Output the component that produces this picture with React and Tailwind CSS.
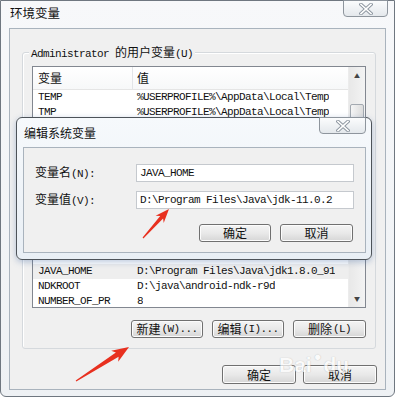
import React from 'react';

const cjk = { fontFamily: '"Noto Sans CJK SC", "Noto Sans", sans-serif' };

const arrowPoints = (x1, y1, x2, y2, neck, head, headLen) => {
  const dx = x2 - x1;
  const dy = y2 - y1;
  const len = Math.hypot(dx, dy);
  const ux = dx / len;
  const uy = dy / len;
  const p = (a, b) => `${(x1 + ux * a - uy * b).toFixed(1)},${(y1 + uy * a + ux * b).toFixed(1)}`;
  return [
    p(0, 0.6),
    p(len - headLen, neck / 2),
    p(len - headLen - 3, head / 2),
    p(len, 0),
    p(len - headLen - 3, -head / 2),
    p(len - headLen, -neck / 2),
    p(0, -0.6),
  ].join(' ');
};

const CloseGlyph = () => (
  <svg width="14" height="12" viewBox="0 0 14 12">
    <path d="M2 1.5 L12 10.5 M12 1.5 L2 10.5" stroke="#8d96a0" strokeWidth="3.6" strokeLinecap="square" />
    <path d="M2 1.5 L12 10.5 M12 1.5 L2 10.5" stroke="#ffffff" strokeWidth="1.6" strokeLinecap="square" />
  </svg>
);

const Btn = ({ children, className = '' }) => (
  <button
    className={`h-[18px] flex items-center justify-center rounded-[3px] border border-[#707070] bg-gradient-to-b from-[#f4f4f4] via-[#e9e9e9] to-[#d6d6d6] text-[12px] leading-none text-[#111] shadow-[inset_0_0_0_1px_#fcfcfc] ${className}`}
  >
    {children}
  </button>
);

// SimSun-like half-width text: 6px advance per character
const Mono = ({ children, className = '' }) => (
  <span className={`font-['Liberation_Mono',monospace] text-[11px] tracking-[-0.6px] leading-none ${className}`}>{children}</span>
);

const Row = ({ name, value, selected }) => (
  <div className={`flex h-[15px] items-center ${selected ? 'bg-[#eeeeee]' : ''}`}>
    <Mono className="w-[100px] pl-[5px] whitespace-nowrap overflow-hidden">{name}</Mono>
    <Mono className="pl-[4px] whitespace-nowrap overflow-hidden">{value}</Mono>
  </div>
);

export default function App() {
  return (
    <div className="relative w-[399px] h-[409px] overflow-hidden bg-white text-[#111]" style={cjk}>
      {/* main window */}
      <div className="w-[395px] h-[397px] rounded-b-[6px] border border-[#6f7780] bg-gradient-to-b from-[#f7f8fa] to-[#eef1f4]">
        <div className="flex items-start justify-between h-[27px] pl-[9px] pr-[6px]">
          <span className="mt-[4px] text-[12.5px] leading-[16px]">环境变量</span>
          <div className="w-[45px] h-[17px] -mt-px flex items-center justify-center rounded-b-[4px] border border-[#8e959d] bg-gradient-to-b from-[#fbfcfd] to-[#e4e8ec]">
            <CloseGlyph />
          </div>
        </div>

        {/* client area */}
        <div className="ml-[8px] w-[377px] h-[362px] border border-[#a9b3bd] bg-[#f0f0f0] pt-[23px]">
          {/* group box */}
          <div className="relative ml-[12px] w-[354px] h-[297px] border border-[#d5d9dd] rounded-[3px] shadow-[inset_1px_1px_0_#ffffff]">
            <div className="absolute left-[6px] -top-[9px] bg-[#f0f0f0] px-[2px] text-[12px] leading-[16px] whitespace-nowrap">
              <Mono>Administrator </Mono>的用户变量<Mono>(U)</Mono>
            </div>

            {/* list view */}
            <div className="ml-[9px] mt-[13px] w-[334px] h-[242px] border border-[#828790] bg-white flex">
              <div className="flex-1 overflow-hidden">
                <div className="flex h-[23px] border-b border-[#e5e5e5] bg-gradient-to-b from-white to-[#f7f8f9] text-[12px]">
                  <div className="w-[100px] pl-[5px] flex items-center border-r border-[#e3e5e8]">变量</div>
                  <div className="pl-[4px] flex items-center">值</div>
                </div>
                <Row name="TEMP" value="%USERPROFILE%\AppData\Local\Temp" />
                <Row name="TMP" value="%USERPROFILE%\AppData\Local\Temp" />
                {/* rows hidden under the dialog */}
                <div className="h-[144px]" />
                <Row name="JAVA_HOME" value="D:\Program Files\Java\jdk1.8.0_91" selected />
                <Row name="NDKROOT" value="D:\java\android-ndk-r9d" />
                <Row name="NUMBER_OF_PR" value="8" />
              </div>
              {/* scrollbar */}
              <div className="w-[17px] flex flex-col bg-gradient-to-r from-[#e8e8e8] to-[#f3f3f3] border-l border-[#ececec]">
                <div className="h-[17px] flex items-center justify-center text-[6px] text-[#444]">▲</div>
                <div className="mt-[20px] mx-[1px] h-[50px] rounded-[2px] border border-[#a3a9b0] bg-gradient-to-r from-[#f5f5f5] to-[#dcdcdc]" />
                <div className="flex-1" />
                <div className="h-[17px] flex items-center justify-center text-[6px] text-[#444]">▼</div>
              </div>
            </div>

            <div className="mt-[12px] pr-[9px] flex justify-end gap-[9px]">
              <Btn className="w-[72px]">新建<Mono className="ml-[1px]">(W)...</Mono></Btn>
              <Btn className="w-[72px]">编辑<Mono className="ml-[1px]">(I)...</Mono></Btn>
              <Btn className="w-[73px]">删除<Mono className="ml-[1px]">(L)</Mono></Btn>
            </div>
          </div>

          <div className="mt-[16px] pr-[8px] flex justify-end gap-[7px]">
            <Btn className="w-[74px] h-[19px]">确定</Btn>
            <Btn className="w-[74px] h-[19px]">取消</Btn>
          </div>
        </div>
      </div>

      {/* baidu watermark */}
      <div className="absolute left-[279px] top-[350px] flex items-end text-white opacity-70 font-['Liberation_Sans',sans-serif] font-bold text-[21px] leading-none [text-shadow:0_0_1px_#9a9a9a]">
        <span>Bai</span>
        <span className="ml-[2px] mb-[12px] text-[13px]">●</span>
        <span className="ml-[2px]">du</span>
      </div>

      {/* edit dialog, floating over the window */}
      <div className="absolute left-[16px] top-[117px] w-[356px] h-[143px] rounded-[6px] border border-[#4d5359] bg-gradient-to-b from-[#f6f9fc] to-[#e9eff5] shadow-[0_2px_6px_rgba(60,100,160,0.35)]">
        <div className="relative h-[29px] flex items-center pl-[7px]">
          <span className="text-[12px] leading-[16px]">编辑系统变量</span>
          <div className="absolute right-[5px] -top-px w-[47px] h-[17px] flex items-center justify-center rounded-b-[4px] border border-[#8e959d] bg-gradient-to-b from-[#fbfcfd] to-[#e4e8ec]">
            <CloseGlyph />
          </div>
        </div>
        <div className="ml-[6px] w-[343px] h-[106px] border border-[#a9b3bd] bg-[#f0f0f0] pt-[16px] pl-[11px]">
          <div className="flex items-center h-[18px]">
            <span className="w-[101px] text-[12px] leading-none">变量名<Mono>(N):</Mono></span>
            <div className="w-[218px] h-[18px] border border-[#c5c9ce] bg-white flex items-center pl-[3px]">
              <Mono>JAVA_HOME</Mono>
            </div>
          </div>
          <div className="flex items-center h-[18px] mt-[9px]">
            <span className="w-[101px] text-[12px] leading-none">变量值<Mono>(V):</Mono></span>
            <div className="w-[218px] h-[18px] border border-[#c5c9ce] bg-white flex items-center pl-[3px]">
              <Mono>D:\Program Files\Java\jdk-11.0.2</Mono>
            </div>
          </div>
          <div className="mt-[15px] pr-[12px] flex justify-end gap-[9px]">
            <Btn className="w-[72px]">确定</Btn>
            <Btn className="w-[73px]">取消</Btn>
          </div>
        </div>
      </div>

      {/* red annotation arrows */}
      <svg className="absolute inset-0 pointer-events-none" width="399" height="409">
        <polygon points={arrowPoints(143, 238, 169, 209, 4, 11, 11)} fill="#e8301f" />
        <polygon points={arrowPoints(76, 381, 129, 347, 5, 13, 14)} fill="#e8301f" />
      </svg>
    </div>
  );
}
